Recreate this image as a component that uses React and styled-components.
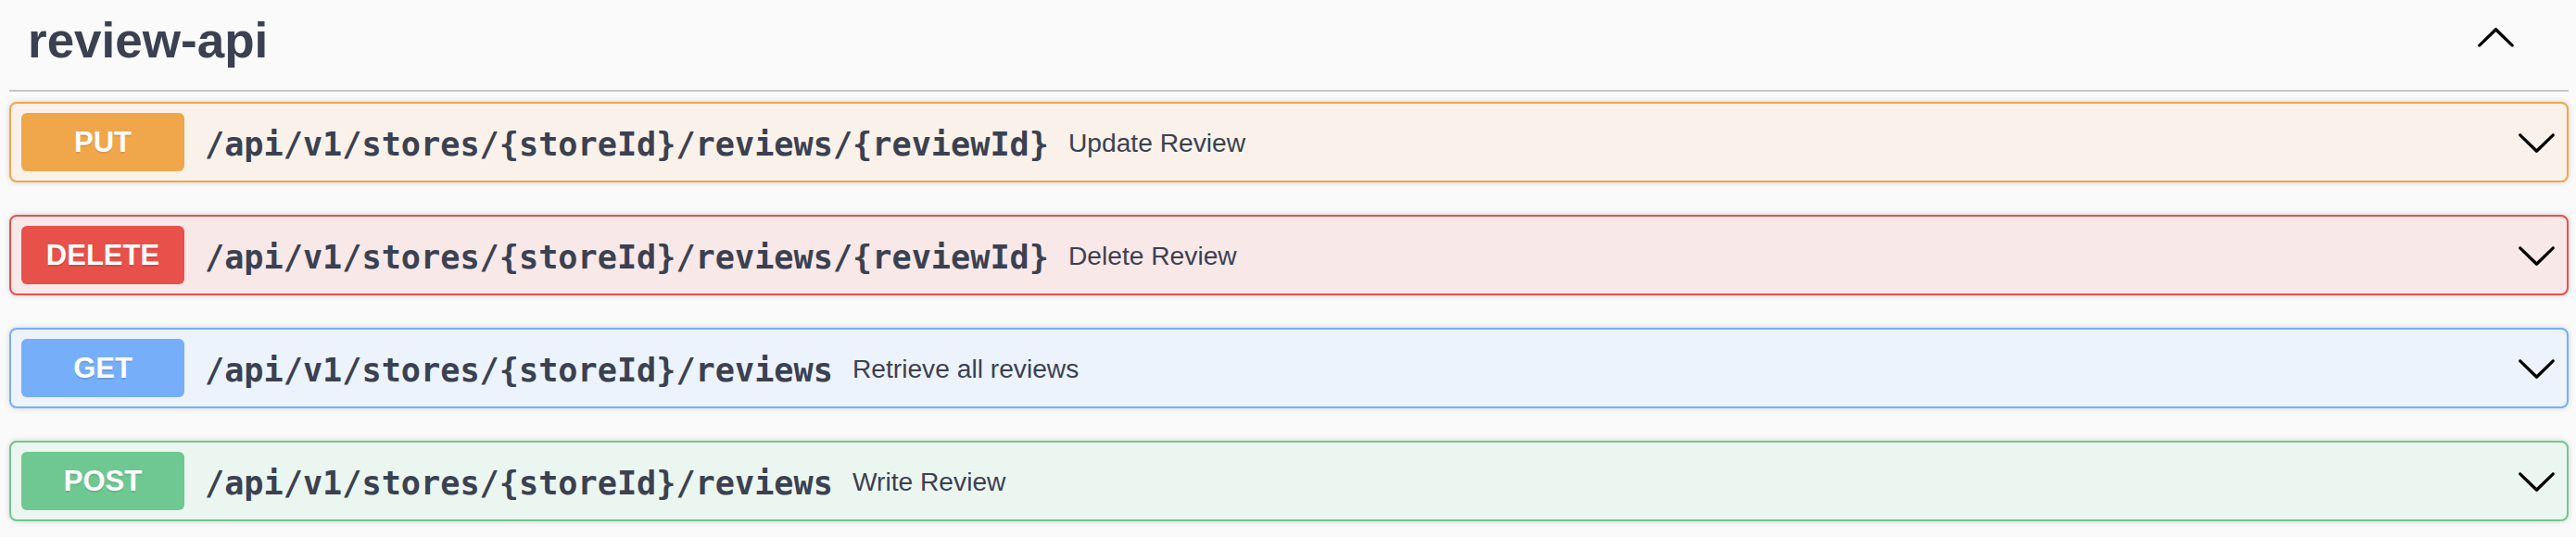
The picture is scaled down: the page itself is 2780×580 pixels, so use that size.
import React from "react";
import styled, { createGlobalStyle } from "styled-components";

const GlobalStyle = createGlobalStyle`
  html, body {
    margin: 0;
    padding: 0;
    background: #fafafa;
  }
  * { box-sizing: border-box; }
`;

const Page = styled.div`
  width: 2780px;
  height: 580px;
  padding: 0 8px 0 10px;
  background: #fafafa;
  font-family: "Liberation Sans", Arial, sans-serif;
  color: #3b4151;
  overflow: hidden;
`;

const TagHeader = styled.div`
  display: flex;
  justify-content: space-between;
  align-items: flex-start;
  height: 99px;
  border-bottom: 2px solid #c4c4cb;
`;

const TagTitle = styled.h3`
  margin: 0;
  padding: 17px 0 0 20px;
  font-family: "Liberation Sans", Arial, sans-serif;
  font-weight: 700;
  font-size: 53px;
  line-height: 53px;
  color: #3b4151;
`;

const ToggleButton = styled.button`
  display: flex;
  align-items: center;
  justify-content: center;
  margin: ${(p) => p.$margin};
  padding: 0;
  border: none;
  background: transparent;
  cursor: pointer;
`;

const OpList = styled.div`
  display: flex;
  flex-direction: column;
  gap: 35px;
  margin-top: 11px;
`;

const OpBlock = styled.div`
  display: flex;
  align-items: center;
  height: 87px;
  padding: 0 10px 0 11px;
  border: 2px solid ${(p) => p.$color};
  border-radius: 8px;
  background: ${(p) => p.$bg};
  box-shadow: 0 0 6px rgba(0, 0, 0, 0.16);
`;

const Method = styled.span`
  display: flex;
  align-items: center;
  justify-content: center;
  flex: none;
  width: 176px;
  height: 63px;
  border-radius: 6px;
  background: ${(p) => p.$color};
  color: #fff;
  font-family: "Liberation Sans", Arial, sans-serif;
  font-weight: 700;
  font-size: 31px;
  text-shadow: 0 2px 0 rgba(0, 0, 0, 0.1);
`;

const Path = styled.span`
  margin-left: 22px;
  padding-top: 3px;
  font-family: "DejaVu Sans Mono", "Liberation Mono", monospace;
  font-weight: 700;
  font-size: 35.2px;
  color: #3b4151;
  white-space: nowrap;
`;

const Desc = styled.span`
  flex: 1;
  margin-left: 21px;
  padding-top: 2px;
  font-family: "Liberation Sans", Arial, sans-serif;
  font-size: 28.2px;
  color: #3b4151;
  white-space: nowrap;
`;

const Arrow = ({ up }) => (
  <svg
    width="45"
    height="45"
    viewBox="0 0 20 20"
    style={up ? { transform: "rotate(180deg)" } : undefined}
  >
    <path
      fill="#000"
      d="M17.418 6.109c.272-.268.709-.268.979 0s.271.701 0 .969l-7.908 7.83c-.27.268-.707.268-.979 0l-7.908-7.83c-.27-.268-.27-.701 0-.969.271-.268.709-.268.979 0L10 13.25l7.418-7.141z"
    />
  </svg>
);

const ops = [
  {
    method: "PUT",
    path: "/api/v1/stores/{storeId}/reviews/{reviewId}",
    desc: "Update Review",
    color: "#f0a64b",
    bg: "#faf2ea",
  },
  {
    method: "DELETE",
    path: "/api/v1/stores/{storeId}/reviews/{reviewId}",
    desc: "Delete Review",
    color: "#e8504a",
    bg: "#f9e8e8",
  },
  {
    method: "GET",
    path: "/api/v1/stores/{storeId}/reviews",
    desc: "Retrieve all reviews",
    color: "#76aef9",
    bg: "#ecf3fc",
  },
  {
    method: "POST",
    path: "/api/v1/stores/{storeId}/reviews",
    desc: "Write Review",
    color: "#6fc791",
    bg: "#ecf6f0",
  },
];

export default function App() {
  return (
    <>
      <GlobalStyle />
      <Page>
        <TagHeader>
          <TagTitle>review-api</TagTitle>
          <ToggleButton $margin="19px 56px 0 0">
            <Arrow up />
          </ToggleButton>
        </TagHeader>
        <OpList>
          {ops.map((op) => (
            <OpBlock key={op.method} $color={op.color} $bg={op.bg}>
              <Method $color={op.color}>{op.method}</Method>
              <Path>{op.path}</Path>
              <Desc>{op.desc}</Desc>
              <ToggleButton $margin="0">
                <Arrow />
              </ToggleButton>
            </OpBlock>
          ))}
        </OpList>
      </Page>
    </>
  );
}
